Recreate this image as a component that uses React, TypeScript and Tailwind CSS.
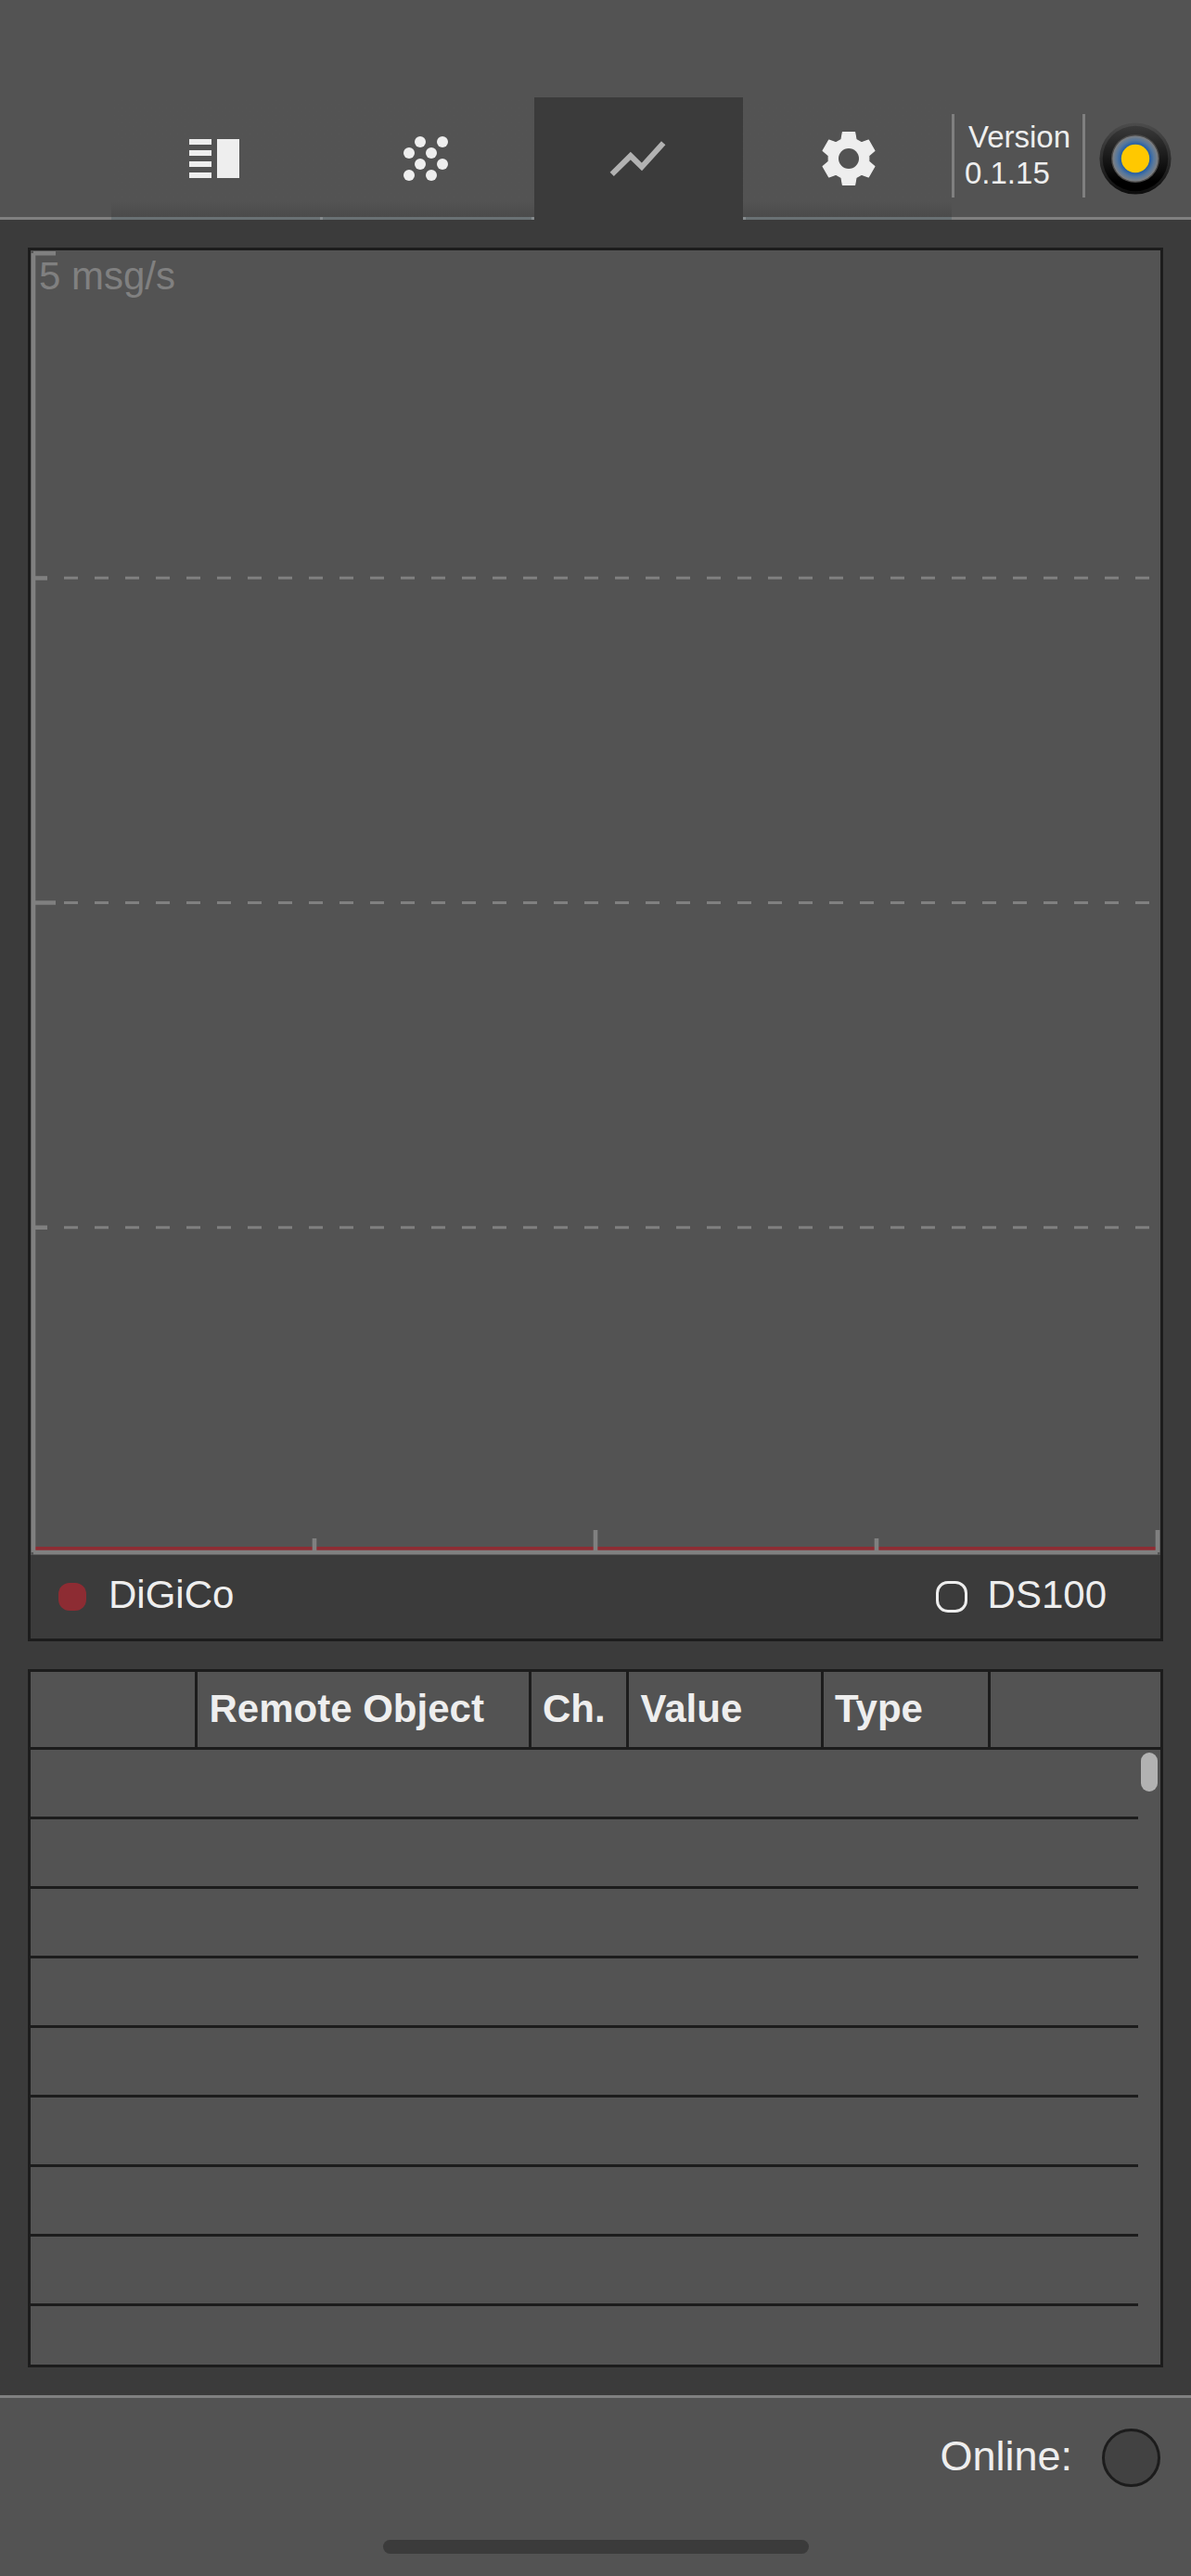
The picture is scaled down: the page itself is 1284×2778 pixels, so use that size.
import type { ReactNode } from "react";

const rot = (x: number, y: number, deg: number) => {
  const a = (deg * Math.PI) / 180;
  return `${(x * Math.cos(a) - y * Math.sin(a)).toFixed(2)},${(x * Math.sin(a) + y * Math.cos(a)).toFixed(2)}`;
};

const gearPoints = [0, 60, 120, 180, 240, 300]
  .flatMap((d) => [rot(-8, -20.5, d), rot(-6.6, -28.4, d), rot(6.6, -28.4, d), rot(8, -20.5, d)])
  .join(" ");

const ListIcon = () => (
  <svg className="h-[42px] w-[54px]" viewBox="0 0 54 42" fill="#eeeeee">
    {[0, 12, 24, 36].map((y) => (
      <rect key={y} x="0" y={y} width="24" height="6" />
    ))}
    <rect x="30" y="0" width="24" height="42" />
  </svg>
);

const DotsIcon = () => (
  <svg className="h-[48px] w-[48px]" viewBox="0 0 48 48" fill="#eeeeee">
    {[
      [18, 6], [42, 6], [6, 18], [30, 18], [18, 30], [42, 30], [6, 42], [30, 42],
    ].map(([x, y]) => (
      <circle key={`${x}-${y}`} cx={x} cy={y} r="6" />
    ))}
  </svg>
);

const TrendIcon = () => (
  <svg className="h-[60px] w-[60px] overflow-visible" viewBox="0 0 60 60">
    <polyline points="0.7,46.8 20.8,27 32.9,39 56.2,13.2" fill="none" stroke="#b2b2b2" strokeWidth="6" />
  </svg>
);

const GearIcon = () => (
  <svg className="h-[60px] w-[60px]" viewBox="-30 -30 60 60">
    <polygon points={gearPoints} fill="#eeeeee" stroke="#eeeeee" strokeWidth="1.2" strokeLinejoin="round" />
    <circle r="11" fill="#535353" />
  </svg>
);

const Logo = () => (
  <svg className="h-[78px] w-[78px]" viewBox="-39 -39 78 78">
    <defs>
      <linearGradient id="rim" x1="0" y1="0" x2="0" y2="1">
        <stop offset="0" stopColor="#4c4c4c" />
        <stop offset="1" stopColor="#0c0c0c" />
      </linearGradient>
      <linearGradient id="ring" x1="0" y1="0" x2="0" y2="1">
        <stop offset="0" stopColor="#3a3a3a" />
        <stop offset="0.85" stopColor="#000000" />
      </linearGradient>
      <radialGradient id="glow">
        <stop offset="0.6" stopColor="#1c5aa8" />
        <stop offset="0.8" stopColor="#54779e" />
        <stop offset="1" stopColor="#808080" />
      </radialGradient>
    </defs>
    <circle r="38.6" fill="url(#rim)" />
    <circle r="35.3" fill="url(#ring)" />
    <circle r="26" fill="#4a4a4a" />
    <circle r="24.6" fill="url(#glow)" />
    <circle r="15.2" fill="#ffc800" />
  </svg>
);

const tabs = [
  { id: "list", icon: <ListIcon />, sep: "right" },
  { id: "dots", icon: <DotsIcon />, sep: "right" },
  { id: "stats", icon: <TrendIcon />, active: true },
  { id: "settings", icon: <GearIcon />, sep: "left" },
];

function Tab({ icon, active, sep }: { icon: ReactNode; active?: boolean; sep?: string }) {
  if (active) {
    return <div className="flex h-[132px] w-[225px] items-center justify-center bg-[#3b3b3b]">{icon}</div>;
  }
  return (
    <div className={sep === "left" ? "flex h-[132px] w-[225px] flex-col" : "flex h-[132px] w-[228px] flex-col"}>
      <div
        className={
          sep === "left"
            ? "flex h-[129px] items-center justify-center bg-linear-to-t from-[#4b4b4b] to-[#535353] to-[16px] pt-[3px] pl-[3px]"
            : "flex h-[129px] items-center justify-center bg-linear-to-t from-[#4b4b4b] to-[#535353] to-[16px] pt-[3px] pr-[6px]"
        }
      >
        {icon}
      </div>
      <div
        className={
          sep === "left"
            ? "h-[3px] border-l-[3px] border-[#858a8d] bg-[#697174]"
            : "h-[3px] border-r-[3px] border-[#858a8d] bg-[#697174]"
        }
      />
    </div>
  );
}

function Plot() {
  const rows = [353.3, 703.5, 1053.7];
  return (
    <div className="relative h-[1407px] bg-[#535353]">
      <svg className="block h-[1407px] w-[1218px]" viewBox="0 0 1218 1407" fill="none" stroke="#808080">
        {rows.map((y) => (
          <line key={y} x1="3" x2="1210" y1={y} y2={y} strokeWidth="3" strokeDasharray="15 18" />
        ))}
        <path d="M3 1400.5H1215" stroke="#8d2c33" strokeWidth="5" />
        <path d="M3 353.5H18M3 703.5H27M3 1053.7H18M3 3.3H27" strokeWidth="4.6" />
        <path d="M3 3V1404M3 1404H1215M306 1389V1404M609 1380V1404M912 1389V1404M1215 1380V1404" strokeWidth="4.6" />
      </svg>
      <span className="absolute top-[4px] left-[9px] text-[42px] leading-[48px] text-[#808080]">5 msg/s</span>
    </div>
  );
}

const columns = [
  { label: "", cls: "w-[180px] border-r-[3px]" },
  { label: "Remote Object", cls: "w-[360px] border-r-[3px] pl-[12.5px]" },
  { label: "Ch.", cls: "w-[105px] border-r-[3px] pl-[12px]" },
  { label: "Value", cls: "w-[210px] border-r-[3px] pl-[12.5px]" },
  { label: "Type", cls: "w-[180px] border-r-[3px] pl-[12px]" },
  { label: "", cls: "flex-1" },
];

export default function App() {
  return (
    <div className="flex h-[2778px] w-[1284px] flex-col overflow-hidden bg-[#535353] font-['Liberation_Sans',Arial,sans-serif] text-[#eeeeee]">
      <header className="flex h-[237px] items-end">
        <div className="h-[3px] w-[120px] bg-[#808080]" />
        {tabs.map((t) => (
          <Tab key={t.id} icon={t.icon} active={t.active} sep={t.sep} />
        ))}
        <div className="flex h-[132px] flex-1 flex-col border-b-[3px] border-[#808080] pt-[18px]">
          <div className="flex h-[90px] items-center">
            <div className="h-[90px] w-[144px] border-x-[3px] border-[#808080] pt-[5px] pl-[11px] text-[33px] leading-[39px] whitespace-nowrap">
              <div className="pl-[4px]">Version</div>
              <div>0.1.15</div>
            </div>
            <div className="pt-[5px] pl-[15px]">
              <Logo />
            </div>
          </div>
        </div>
      </header>

      <main className="flex h-[2346px] flex-col gap-[30px] bg-[#3b3b3b] p-[30px]">
        <section className="h-[1503px] border-[3px] border-[#1c1c1c]">
          <Plot />
          <div className="flex h-[90px] items-center pl-[30px] text-[42px] leading-[48px]">
            <div className="h-[30px] w-[30px] rounded-[12px] bg-[#8d2c33]" />
            <span className="ml-[24px] pb-[4px]">DiGiCo</span>
            <div className="mr-[22px] ml-auto h-[34px] w-[34px] rounded-[13px] border-[3px] border-[#eeeeee]" />
            <span className="mr-[58px] pb-[4px]">DS100</span>
          </div>
        </section>

        <section className="flex h-[753px] flex-col border-[3px] border-[#1c1c1c] bg-[#535353]">
          <div className="flex h-[84px] border-b-[3px] border-[#1c1c1c] text-[42px] font-bold">
            {columns.map((c, i) => (
              <div key={i} className={`flex items-center border-[#1c1c1c] whitespace-nowrap pb-[2px] ${c.cls}`}>
                {c.label}
              </div>
            ))}
          </div>
          <div className="flex flex-1 justify-between">
            <div className="flex w-[1194px] flex-col">
              {[0, 1, 2, 3, 4, 5, 6, 7].map((i) => (
                <div key={i} className="h-[75px] border-b-[3px] border-[#1c1c1c]" />
              ))}
            </div>
            <div className="mt-[3px] mr-[3px] h-[42px] w-[18px] rounded-full bg-[#b2b2b2]" />
          </div>
        </section>
      </main>

      <footer className="flex flex-1 flex-col border-t-[3px] border-[#808080]">
        <div className="flex items-center justify-end pt-[33px] pr-[33px]">
          <span className="mr-[32px] pb-[3px] text-[45px] leading-[52px]">Online:</span>
          <div className="h-[63px] w-[63px] rounded-full border-[3px] border-[#1c1c1c] bg-[#424242]" />
        </div>
        <div className="mt-[57px] ml-[413px] h-[15px] w-[459px] rounded-full bg-[#3b3b3b]" />
      </footer>
    </div>
  );
}
